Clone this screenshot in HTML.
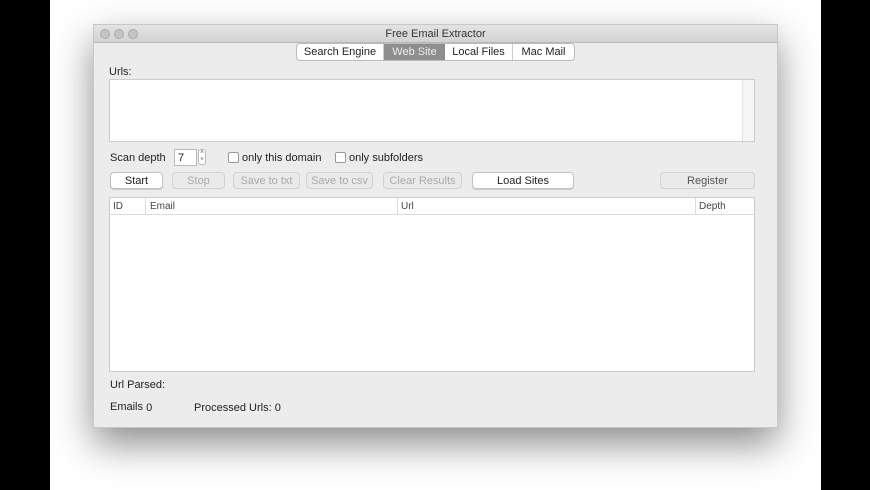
<!DOCTYPE html>
<html><head><style>
*{box-sizing:border-box;margin:0;padding:0}
body{width:870px;height:490px;background:#fff;position:relative;overflow:hidden;font-family:"Liberation Sans",sans-serif;font-size:11px;color:#222}
.a{position:absolute}
.blk{background:#000;top:0;height:490px}
.win{left:93px;top:24px;width:685px;height:404px;background:#ececec;border:1px solid #c8c8c8;box-shadow:0 16px 36px rgba(0,0,0,.45)}
.title{left:0;top:0;width:683px;height:18px;background:linear-gradient(#e4e4e4,#d2d2d2);border-bottom:1px solid #b8b8b8;text-align:center;line-height:19px;font-size:11px;color:#333}
.dot{width:10px;height:10px;border-radius:50%;background:#c4c4c4;border:1px solid #aaa;top:4px}
.btn{background:#fff;border:1px solid #c2c2c2;border-radius:4px;height:17px;line-height:16px;text-align:center;font-size:11px;box-shadow:0 1px 0 #ccc}
.dis{background:#eaeaea;color:#aaa;border-color:#d2d2d2;box-shadow:none}
.cb{width:11px;height:11px;border:1px solid #999;border-radius:2px;background:#fff}
</style></head><body>
<div class="a blk" style="left:0;width:50px"></div>
<div class="a blk" style="left:821px;width:49px"></div>
<div class="a win">
 <div class="a title">Free Email Extractor</div>
 <div class="a dot" style="left:6px"></div>
 <div class="a dot" style="left:20px"></div>
 <div class="a dot" style="left:34px"></div>
</div>
<!-- tabs -->
<div class="a" style="left:296px;top:43px;width:279px;height:18px;border:1px solid #bbb;border-radius:4px;background:#fff;overflow:hidden;display:flex;font-size:11px;line-height:17px">
 <div style="width:87px;text-align:center;border-right:1px solid #ccc">Search Engine</div>
 <div style="width:61px;text-align:center;background:#8e8e8e;color:#eee">Web Site</div>
 <div style="width:68px;text-align:center;border-right:1px solid #ccc">Local Files</div>
 <div style="flex:1;text-align:center">Mac Mail</div>
</div>
<div class="a" style="left:109px;top:66px">Urls:</div>
<div class="a" style="left:109px;top:79px;width:646px;height:63px;background:#fff;border:1px solid #ccc"></div>
<div class="a" style="left:742px;top:80px;width:12px;height:61px;background:#f6f6f6;border-left:1px solid #e2e2e2"></div>
<div class="a" style="left:110px;top:152px">Scan depth</div>
<div class="a" style="left:174px;top:149px;width:23px;height:17px;background:#fff;border:1px solid #bbb;padding-left:3px;line-height:16px">7</div>
<div class="a" style="left:198px;top:149px;width:8px;height:16px;border:1px solid #bbb;border-radius:3px;background:#fff;font-size:6px;line-height:7px;text-align:center;color:#555">˄<br>˅</div>
<div class="a cb" style="left:228px;top:152px"></div>
<div class="a" style="left:242px;top:152px">only this domain</div>
<div class="a cb" style="left:335px;top:152px"></div>
<div class="a" style="left:349px;top:152px">only subfolders</div>
<div class="a btn" style="left:110px;top:172px;width:53px">Start</div>
<div class="a btn dis" style="left:172px;top:172px;width:53px">Stop</div>
<div class="a btn dis" style="left:233px;top:172px;width:67px">Save to txt</div>
<div class="a btn dis" style="left:306px;top:172px;width:67px">Save to csv</div>
<div class="a btn dis" style="left:383px;top:172px;width:79px">Clear Results</div>
<div class="a btn" style="left:472px;top:172px;width:102px">Load Sites</div>
<div class="a btn dis" style="left:660px;top:172px;width:95px;color:#555">Register</div>
<div class="a" style="left:109px;top:197px;width:646px;height:175px;background:#fff;border:1px solid #ccc">
 <div class="a" style="left:0;top:0;width:644px;height:17px;border-bottom:1px solid #ddd;font-size:10px;line-height:17px;color:#444">
  <span class="a" style="left:3px">ID</span>
  <span class="a" style="left:35px;border-left:1px solid #ddd;padding-left:4px;height:16px">Email</span>
  <span class="a" style="left:287px;border-left:1px solid #ddd;padding-left:3px;height:16px">Url</span>
  <span class="a" style="left:585px;border-left:1px solid #ddd;padding-left:3px;height:16px">Depth</span>
 </div>
</div>
<div class="a" style="left:110px;top:379px">Url Parsed:</div>
<div class="a" style="left:110px;top:401px">Emails <span style="position:relative;top:1px">0</span></div>
<div class="a" style="left:194px;top:402px">Processed Urls: 0</div>
</body></html>
